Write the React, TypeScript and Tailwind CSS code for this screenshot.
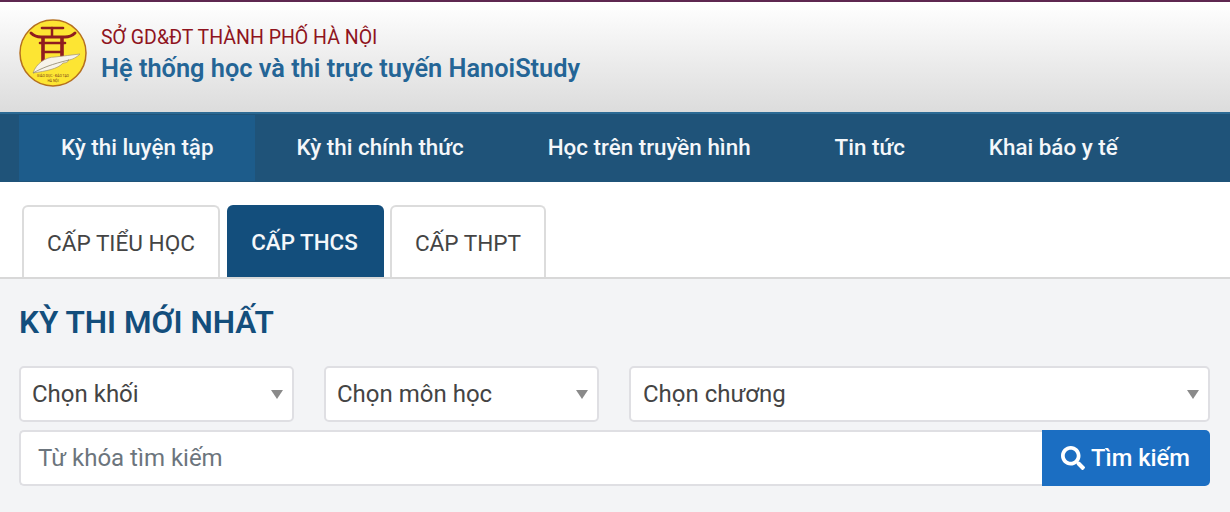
import { FaSearch } from "react-icons/fa";

const navItems = ["Kỳ thi luyện tập", "Kỳ thi chính thức", "Học trên truyền hình", "Tin tức", "Khai báo y tế"];

function Logo() {
  return (
    <svg width="68" height="68" viewBox="0 0 68 68" className="shrink-0">
      <circle cx="34" cy="34" r="33" fill="#fde533" stroke="#b5701f" strokeWidth="1.5" />
      <g fill="none" stroke="#8f1d1f" strokeLinecap="round">
        <path d="M23 9h21" strokeWidth="2.6" />
        <path d="M12 14c3 3 6 4 10 4h24c4 0 7-1 10-4" strokeWidth="3" />
        <path d="M33 9v8" strokeWidth="2.5" />
        <path d="M21 24h25" strokeWidth="2.6" />
        <path d="M24 19v27M43 19v20" strokeWidth="3.6" />
        <path d="M24 33h19" strokeWidth="2.6" />
      </g>
      <path d="M14 54c3-9 12-16 22-16 8-1 17-2 25-3-3 3-8 6-12 6 1 1-1 3-5 3-5 6-17 8-30 10Z" fill="#f7f3ea" stroke="#a6956e" strokeWidth="0.7" />
      <path d="M14 54c9-5 19-9 36-13" fill="none" stroke="#8d8468" strokeWidth="0.8" />
      <text x="34" y="58" textAnchor="middle" fontSize="3.4" fill="#7a3b18" fontFamily="Roboto, sans-serif">GIÁO DỤC - ĐÀO TẠO</text>
      <text x="34" y="63" textAnchor="middle" fontSize="3.4" fill="#7a3b18" fontFamily="Roboto, sans-serif">HÀ NỘI</text>
    </svg>
  );
}

function SelectBox({ label, className }: { label: string; className: string }) {
  return (
    <div className={`h-[56px] bg-white border-2 border-[#dfdfe3] rounded-[5px] flex items-center justify-between pr-[9px] ${className}`}>
      <span className="text-[24px] text-[#444]">{label}</span>
      <span className="w-0 h-0 border-x-[6px] border-x-transparent border-t-[9px] border-t-[#8a8a8a]" />
    </div>
  );
}

export default function App() {
  return (
    <div className="w-[1230px] h-[512px] overflow-hidden bg-[#f3f4f6] font-['Roboto',sans-serif]">
      <div className="h-[2px] bg-[#5e2750]" />
      <header className="h-[110px] bg-gradient-to-b from-white to-[#dcdcdc] flex items-center pl-[19px] pb-[8px] gap-[14px]">
        <Logo />
        <div className="pt-[1px]">
          <p className="text-[19.5px] leading-[26px] pt-[2px] text-[#8f1420]">SỞ GD&amp;ĐT THÀNH PHỐ HÀ NỘI</p>
          <h1 className="text-[25.35px] leading-[34px] font-semibold text-[#246596]">Hệ thống học và thi trực tuyến HanoiStudy</h1>
        </div>
      </header>
      <nav className="h-[70px] bg-[#1f5379] flex pl-[19px] border-t-2 border-[#2c6a94]">
        {navItems.map((item, i) => (
          <a key={item} className={`my-[1px] flex items-center text-[22.4px] font-medium text-[#f4f7fa] ${i === 0 ? "pl-[42px] pr-[41px] bg-[#1d5c8b]" : "px-[42px]"}`}>
            {item}
          </a>
        ))}
      </nav>
      <div className="h-[97px] bg-white border-b-2 border-[#d8d8d8] flex items-end pl-[22px]">
        <div className="h-[72px] w-[198px] bg-white border-2 border-b-0 border-[#dcdcdc] rounded-t-[6px] flex items-center justify-center pt-[3px] text-[22.6px] text-[#444]">CẤP TIỂU HỌC</div>
        <div className="h-[72px] w-[157px] ml-[7px] bg-[#134e7c] rounded-t-[6px] flex items-center justify-center pt-[3px] pr-[2px] text-[22.4px] font-medium text-[#f4f7fa]">CẤP THCS</div>
        <div className="h-[72px] w-[156px] ml-[6px] bg-white border-2 border-b-0 border-[#dcdcdc] rounded-t-[6px] flex items-center justify-center pt-[3px] text-[22.6px] text-[#444]">CẤP THPT</div>
      </div>
      <main className="pl-[19px] pr-[20px]">
        <h2 className="pt-[24px] text-[31.5px] leading-[40px] font-semibold text-[#134e7c]">KỲ THI MỚI NHẤT</h2>
        <div className="flex gap-[30px] mt-[23px]">
          <SelectBox label="Chọn khối" className="w-[275px] pl-[11px]" />
          <SelectBox label="Chọn môn học" className="w-[275px] pl-[11px]" />
          <SelectBox label="Chọn chương" className="flex-1 pl-[12px]" />
        </div>
        <div className="flex h-[56px] mt-[8px]">
          <div className="flex-1 bg-white border-2 border-r-0 border-[#dfdfe3] rounded-l-[5px] flex items-center pl-[17px] text-[24px] text-[#6c757d]">Từ khóa tìm kiếm</div>
          <button className="w-[168px] bg-[#1b6ec2] rounded-r-[5px] flex items-center justify-center gap-[6px] pr-[1px] text-[23.7px] font-medium text-white">
            <FaSearch size={24} />
            <span className="pt-[1px]">Tìm kiếm</span>
          </button>
        </div>
      </main>
    </div>
  );
}
